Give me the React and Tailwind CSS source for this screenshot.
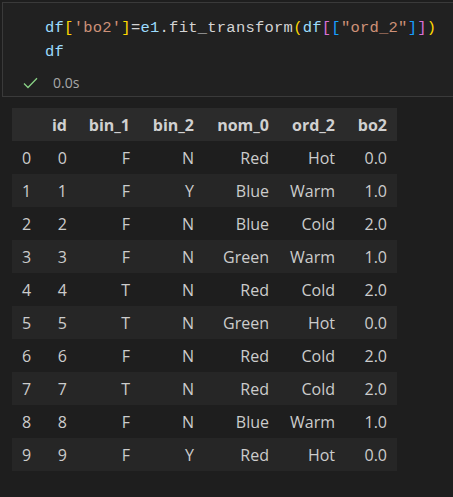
const rows = [
  ["0", "0", "F", "N", "Red", "Hot", "0.0"],
  ["1", "1", "F", "Y", "Blue", "Warm", "1.0"],
  ["2", "2", "F", "N", "Blue", "Cold", "2.0"],
  ["3", "3", "F", "N", "Green", "Warm", "1.0"],
  ["4", "4", "T", "N", "Red", "Cold", "2.0"],
  ["5", "5", "T", "N", "Green", "Hot", "0.0"],
  ["6", "6", "F", "N", "Red", "Cold", "2.0"],
  ["7", "7", "T", "N", "Red", "Cold", "2.0"],
  ["8", "8", "F", "N", "Blue", "Warm", "1.0"],
  ["9", "9", "F", "Y", "Red", "Hot", "0.0"],
];

const headers = ["id", "bin_1", "bin_2", "nom_0", "ord_2", "bo2"];
const widths = ["w-[35px]", "w-[63px]", "w-[64px]", "w-[75px]", "w-[66px]", "w-[52px]"];

function CodeCell() {
  return (
    <div className="mt-[2px] ml-[2px] h-[95px] border-y border-l border-[#3a3a3a] bg-[#212121] pt-[13px]">
      <div className="pl-[42px] text-[15.5px] leading-[24px] tracking-[0.24px] font-['Liberation_Mono',monospace] whitespace-pre">
        <div>
          <span className="text-[#9cdcfe]">df</span>
          <span className="text-[#ffd700]">[</span>
          <span className="text-[#ce9178]">'bo2'</span>
          <span className="text-[#ffd700]">]</span>
          <span className="text-[#d4d4d4]">=</span>
          <span className="text-[#9cdcfe]">e1</span>
          <span className="text-[#d4d4d4]">.fit_transform</span>
          <span className="text-[#ffd700]">(</span>
          <span className="text-[#9cdcfe]">df</span>
          <span className="text-[#da70d6]">[</span>
          <span className="text-[#179fff]">[</span>
          <span className="text-[#ce9178]">"ord_2"</span>
          <span className="text-[#179fff]">]</span>
          <span className="text-[#da70d6]">]</span>
          <span className="text-[#ffd700]">)</span>
        </div>
        <div className="text-[#9cdcfe]">df</div>
      </div>
      <div className="mt-[8px] flex h-[21px] items-center pl-[20px] font-['Open_Sans',sans-serif] text-[14px] text-[#a8a8a8]">
        <svg width="15" height="12" viewBox="0 0 15 12" fill="none">
          <path d="M1 6.5 L5 10.5 L14 1.2" stroke="#89d185" strokeWidth="1.3" />
        </svg>
        <span className="ml-[15px]">0.0s</span>
      </div>
    </div>
  );
}

export default function App() {
  return (
    <div className="h-[497px] w-full overflow-hidden bg-[#1e1e1e]">
      <CodeCell />

      {/* ===== OUTPUT TABLE ===== */}
      <table className="mt-[11px] ml-[12px] table-fixed border-collapse font-['Open_Sans',sans-serif] text-[16px] text-[#cccccc]">
        <thead>
          <tr className="h-[33px] bg-[#2b2b2b]">
            <th className="w-[30px]"></th>
            {headers.map((h, i) => (
              <th key={h} className={`${widths[i]} pr-[10px] text-right font-bold text-[#d0d0d0]`}>
                {h}
              </th>
            ))}
          </tr>
        </thead>
        <tbody>
          {rows.map((r, i) => (
            <tr key={i} className={i % 2 === 1 ? "h-[33px] bg-[#262626]" : "h-[33px]"}>
              <td className="pl-[10px] text-left">{r[0]}</td>
              {r.slice(1).map((c, j) => (
                <td key={j} className="pr-[10px] text-right">
                  {c}
                </td>
              ))}
            </tr>
          ))}
        </tbody>
      </table>
    </div>
  );
}
